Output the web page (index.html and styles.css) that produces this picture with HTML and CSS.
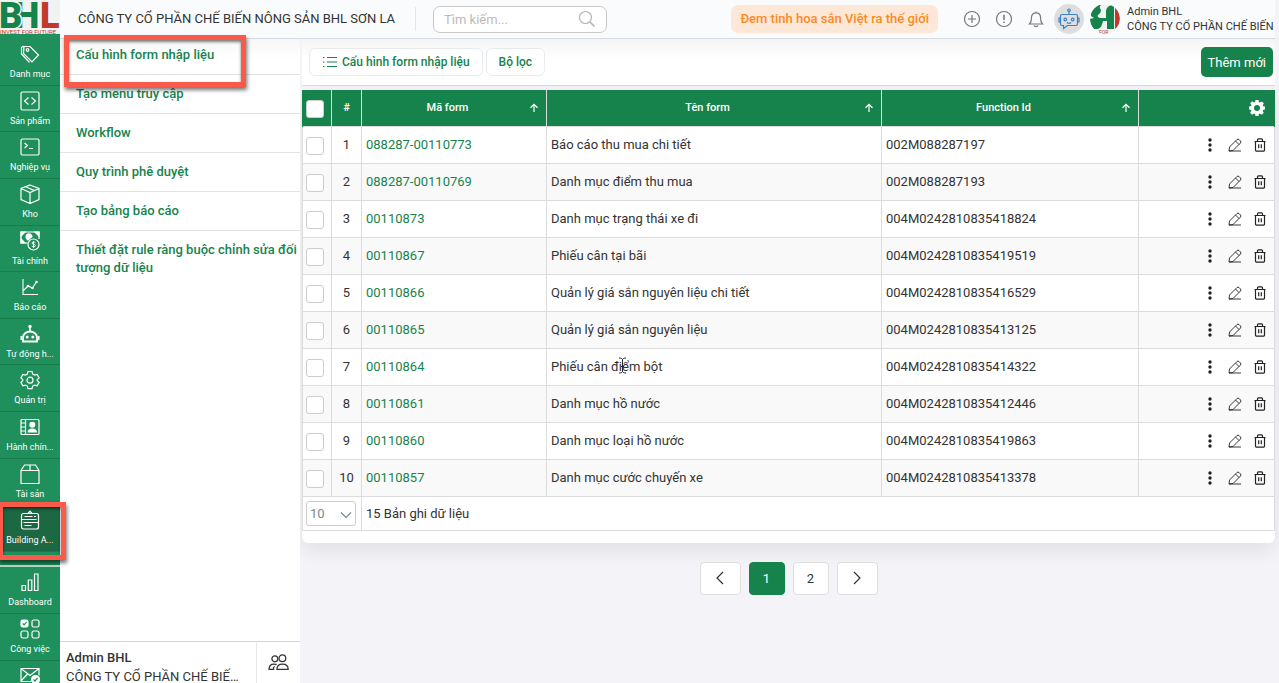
FILE: index.html
```html
<!DOCTYPE html>
<html lang="vi">

<head>
    <meta charset="UTF-8">
    <meta name="viewport" content="width=device-width, initial-scale=1.0">
    <title>Cấu hình form nhập liệu</title>
    <link rel="stylesheet" href="styles.css">
</head>

<body>

    <!-- icon sprite -->
    <svg class="sprite" aria-hidden="true">
        <symbol id="i-tag" viewBox="0 0 20 20"><path d="M4 2.500h6l8.500 8.500-6.500 7L3.500 9.500z"/><path d="M3.500 2L1.500 3.500v6.500l8 8.500"/><circle cx="7.500" cy="6" r="1.300"/></symbol>
        <symbol id="i-code" viewBox="0 0 20 20"><rect x="1" y="1" width="18" height="18" rx="1.500"/><path d="M8.500 6.500L4.500 10l4 3.500M11.500 6.500l4 3.500-4 3.500"/></symbol>
        <symbol id="i-term" viewBox="0 0 20 20"><rect x="1" y="2" width="18" height="16" rx="1.500"/><path d="M4.500 6l3 2.500-3 2.500M9 11.500h4"/></symbol>
        <symbol id="i-box" viewBox="0 0 20 20"><path d="M10 1l9 3.500v11L10 19.500l-9-4v-11zM1 4.500l9 4 9-4M10 8.500v11M5.500 2.800l9 3.800"/></symbol>
        <symbol id="i-money" viewBox="0 0 20 20"><path d="M7.500 12H1V1h18v7"/><path d="M1 1h4L1 5zM19 1h-4l4 4zM1 12h4L1 8z" fill="currentColor"/><path d="M7 8a3 3 0 1 1 5-2.500L8 9z" fill="currentColor"/><circle cx="13.500" cy="13.500" r="5.500"/><path d="M15.300 11.700c-.5-1-3.300-1-3.300.4s3.300 1 3.300 2.500-2.800 1.500-3.500.4M13.500 10.300v6.500" stroke-width="1"/></symbol>
        <symbol id="i-chart" viewBox="0 0 20 20"><path d="M3 2v15.500h15M3.500 13.500L8 9l4.500 2L16 5.500" stroke-width="1.100"/><g fill="currentColor" stroke="none"><circle cx="8" cy="9" r="1.300"/><circle cx="12.500" cy="11" r="1.300"/><circle cx="16.500" cy="5" r="1.300"/></g></symbol>
        <symbol id="i-robot" viewBox="0 0 20 20"><path d="M3 17.500v-4a7 6 0 0 1 14 0v4z" stroke-width="1.800"/><path d="M10 7V2.500M1.200 12v4M18.800 12v4" stroke-width="1.500"/><g fill="currentColor" stroke="none"><circle cx="10" cy="2.500" r="1.700"/><circle cx="7.200" cy="13" r="1.500"/><circle cx="12.800" cy="13" r="1.500"/></g></symbol>
        <symbol id="i-gear" viewBox="0 0 20 20"><path d="M8 1.500h4l.7 2.600 1.800 1 2.600-.7 2 3.400L17.200 9.700v.9l1.900 1.800-2 3.400-2.600-.7-1.800 1-.7 2.600H8l-.7-2.600-1.800-1-2.600.7-2-3.400 1.900-1.800v-.9L.9 7.800l2-3.400 2.600.7 1.800-1z"/><circle cx="10" cy="10.200" r="3"/></symbol>
        <symbol id="i-contact" viewBox="0 0 20 20"><rect x="1" y="2.500" width="18" height="15" rx="1"/><path d="M5.500 2.500v15M1 6h4.500M1 10h4.500M1 14h4.500"/><g fill="currentColor" stroke="none"><circle cx="12.300" cy="7.800" r="3"/><path d="M7.500 15.500c.3-3 2-4 4.800-4s4.500 1 4.800 4z"/></g></symbol>
        <symbol id="i-asset" viewBox="0 0 20 20"><path d="M1 6.500h18V19.500H1zM1 6.500L4.500 1h11L19 6.500M10 1v5"/></symbol>
        <symbol id="i-build" viewBox="0 0 20 20"><rect x="1.500" y="3.500" width="17" height="15.500" rx="2"/><path d="M8 3.500L10 1.200l2 2.300M4.500 6.500h8M1.500 9.500h15M3.500 12.500h15M4.500 15.500h7M14 6.500h2" stroke-width="1.200"/></symbol>
        <symbol id="i-bars" viewBox="0 0 20 20"><path d="M2 13.500h3.500v5H2zM8.300 8h3.500v10.500H8.300zM14.500 2H18v16.500h-3.500z"/></symbol>
        <symbol id="i-tasks" viewBox="0 0 20 20"><rect x="1" y="1" width="7" height="7" rx="1.800" fill="currentColor"/><rect x="12" y="1" width="7" height="7" rx="1.800"/><rect x="1" y="12" width="7" height="7" rx="1.800"/><rect x="12" y="12" width="7" height="7" rx="1.800"/><path d="M2.800 4.500l1.300 1.300 2.500-2.600" stroke="#1f8f5b" stroke-width="1.200"/></symbol>
        <symbol id="i-mail" viewBox="0 0 20 20"><path d="M11 15.500H1V2.500h18v7M1 2.500l9 7 9-7M1 15l6.500-7"/><circle cx="15.500" cy="13.500" r="4" fill="currentColor"/><path d="M13.500 13.500l1.500 1.500 2.500-3" stroke="#1f8f5b" stroke-width="1.200"/></symbol>
        <symbol id="i-users" viewBox="0 0 20 20"><circle cx="6.500" cy="6.500" r="2.800"/><circle cx="13.700" cy="6" r="3.200"/><path d="M8.500 16.500c0-3.500 2-5 5.200-5s5.500 1.500 5.500 5zM6 16.500H1c0-3.500 1.500-5 4.500-5 1 0 2 .1 2.700.5M5 16.500c0-1.500.5-2.500 1.300-3"/></symbol>
        <symbol id="i-search" viewBox="0 0 18 18"><circle cx="7.500" cy="7.500" r="6"/><path d="M12 12l4.500 4.500" stroke-width="1.700"/></symbol>
        <symbol id="i-plus" viewBox="0 0 18 18"><circle cx="9" cy="9" r="7.500"/><path d="M9 5v8M5 9h8"/></symbol>
        <symbol id="i-alert" viewBox="0 0 18 18"><circle cx="9" cy="9" r="7.500"/><path d="M9 4.800v5.200M9 11.500v1.500" stroke-width="1.500"/></symbol>
        <symbol id="i-bell" viewBox="0 0 18 18"><path d="M9 1.500v1M2.500 14c2-2 2-3.500 2-6.500C4.500 4.500 6.500 2.800 9 2.800s4.500 1.700 4.500 4.700c0 3 0 4.500 2 6.500zM7 15.500c.3 1.300 3.700 1.300 4 0"/></symbol>
        <symbol id="i-bot" viewBox="0 0 22 22"><path d="M4 6.500h14a1.500 1.500 0 0 1 1.500 1.500v8a1.500 1.500 0 0 1-1.500 1.500H9.500L5.500 20.500v-3H4A1.500 1.500 0 0 1 2.500 16V8A1.500 1.500 0 0 1 4 6.500zM2.500 10H1v4h1.500M19.500 10H21v4h-1.500M11 6.500V3.500M9 14.500c1 1 3 1 4 0"/><circle cx="11" cy="2.300" r="1.300"/><circle cx="7.300" cy="11.500" r="1.300"/><circle cx="14.700" cy="11.500" r="1.300"/></symbol>
        <symbol id="i-list" viewBox="0 0 16 16"><path d="M5 3.500h10M5 8h10M5 12.500h10M1 3.500h1.500M1 8h1.500M1 12.500h1.500"/></symbol>
        <symbol id="i-up" viewBox="0 0 10 10"><path d="M5 9V1.500M1.500 4.700L5 1.300l3.500 3.400"/></symbol>
        <symbol id="i-cog" viewBox="0 0 16 16"><path fill="currentColor" fill-rule="evenodd" stroke="none" d="M6.500 0h3l.5 2.200 1 .4L13 1.400l1.900 2L13.700 5.200l.4 1L16 6.600v2.900l-2 .4-.4 1 1.200 1.900-2 2-1.900-1.200-1 .4L9.500 16h-3L6 14l-1-.4-1.900 1.200-2-2 1.200-1.900-.4-1L0 9.500v-3l2-.4.400-1L1.200 3.300l2-2L5 2.500l1-.4zM8 5a3 3 0 1 0 0 6 3 3 0 0 0 0-6z"/></symbol>
        <symbol id="i-more" viewBox="0 0 14 14"><g fill="currentColor" stroke="none"><circle cx="7" cy="2" r="1.700"/><circle cx="7" cy="7" r="1.700"/><circle cx="7" cy="12" r="1.700"/></g></symbol>
        <symbol id="i-edit" viewBox="0 0 14 14"><path d="M1 13l.5-4L9 1.500a1.500 1.500 0 0 1 2 0l1.500 1.500a1.500 1.500 0 0 1 0 2L5 12.500zM7.500 3l3.500 3.500M1 13h12" stroke-width=".9"/></symbol>
        <symbol id="i-trash" viewBox="0 0 14 14"><path d="M1.500 3.500h11M2.500 3.500v8.500a1.200 1.200 0 0 0 1.200 1.200h6.600a1.200 1.200 0 0 0 1.200-1.200V3.500M4.500 3.500V1.800a1 1 0 0 1 1-1h3a1 1 0 0 1 1 1v1.700M5.700 6.300v4M8.300 6.300v4"/></symbol>
        <symbol id="i-left" viewBox="0 0 14 14"><path d="M10 1L4 7l6 6"/></symbol>
        <symbol id="i-right" viewBox="0 0 14 14"><path d="M4 1l6 6-6 6"/></symbol>
        <symbol id="i-down" viewBox="0 0 14 14"><path d="M2 4.500l5 5 5-5"/></symbol>
    </svg>

    <div class="app">
        <aside class="sidebar">
            <a class="logo" href="#" aria-label="BHL">
                <svg viewBox="0 0 60 34">
                    <text x="14" y="28" class="logo-letter green">H</text>
                    <text x="-1" y="28" class="logo-letter green edge">B</text>
                    <text x="40" y="28" class="logo-letter red">L</text>
                    <text x="0" y="34" class="logo-sub">INVEST FOR FUTURE</text>
                </svg>
            </a>
            <nav class="side-nav">
                <a href="#"><svg><use href="#i-tag"/></svg><span>Danh mục</span></a>
                <a href="#"><svg><use href="#i-code"/></svg><span>Sản phẩm</span></a>
                <a href="#"><svg><use href="#i-term"/></svg><span>Nghiệp vụ</span></a>
                <a href="#"><svg><use href="#i-box"/></svg><span>Kho</span></a>
                <a href="#"><svg><use href="#i-money"/></svg><span>Tài chính</span></a>
                <a href="#"><svg><use href="#i-chart"/></svg><span>Báo cáo</span></a>
                <a href="#"><svg><use href="#i-robot"/></svg><span>Tự động h...</span></a>
                <a href="#"><svg><use href="#i-gear"/></svg><span>Quản trị</span></a>
                <a href="#"><svg><use href="#i-contact"/></svg><span>Hành chín...</span></a>
                <a href="#"><svg><use href="#i-asset"/></svg><span>Tài sản</span></a>
                <a href="#" class="active"><svg><use href="#i-build"/></svg><span>Building A...</span></a>
            </nav>
            <nav class="side-nav side-extra">
                <a href="#"><svg><use href="#i-bars"/></svg><span>Dashboard</span></a>
                <a href="#"><svg><use href="#i-tasks"/></svg><span>Công việc</span></a>
                <a href="#" aria-label="Mail"><svg><use href="#i-mail"/></svg></a>
            </nav>
            <div class="mark mark-side"></div>
        </aside>

        <div class="page">
            <header class="topbar">
                <div class="company">CÔNG TY CỔ PHẦN CHẾ BIẾN NÔNG SẢN BHL SƠN LA</div>
                <label class="search">
                    <input type="text" placeholder="Tìm kiếm..." aria-label="Tìm kiếm">
                    <svg><use href="#i-search"/></svg>
                </label>
                <div class="slogan">Đem tinh hoa sắn Việt ra thế giới</div>
                <div class="tools">
                    <button aria-label="Thêm"><svg><use href="#i-plus"/></svg></button>
                    <button aria-label="Thông tin"><svg><use href="#i-alert"/></svg></button>
                    <button aria-label="Thông báo"><svg><use href="#i-bell"/></svg></button>
                </div>
                <button class="bot" aria-label="Trợ lý"><svg><use href="#i-bot"/></svg></button>
                <svg class="avatar" viewBox="0 0 30 30">
                    <path class="a-green" d="M1 10C2 5 5 2 8 1h3c-2 2-1 3 0 5 0 3-2 4-3 5s0 3 3 3h5V8c0-4 2-6 6-7h2v24h-7v-8h-4c-1 5-3 8-6 8H4C1 22 0 18 0 15l4-1-3-2z"/>
                    <path class="a-red" d="M25 3c6 6 7 16 0 22z"/>
                    <text x="9" y="30">FOR</text>
                </svg>
                <div class="user">
                    <div>Admin BHL</div>
                    <div>CÔNG TY CỔ PHẦN CHẾ BIẾN</div>
                </div>
            </header>

            <div class="body">
                <section class="submenu">
                    <nav>
                        <a href="#">Cấu hình form nhập liệu</a>
                        <a href="#">Tạo menu truy cập</a>
                        <a href="#">Workflow</a>
                        <a href="#">Quy trình phê duyệt</a>
                        <a href="#">Tạo bảng báo cáo</a>
                        <a href="#">Thiết đặt rule ràng buộc chỉnh sửa đối tượng dữ liệu</a>
                    </nav>
                    <div class="account">
                        <div class="account-name">
                            <b>Admin BHL</b>
                            <span>CÔNG TY CỔ PHẦN CHẾ BIẾN NÔNG SẢN BHL SƠN LA</span>
                        </div>
                        <button aria-label="Người dùng"><svg><use href="#i-users"/></svg></button>
                    </div>
                    <div class="mark mark-menu"></div>
                </section>

                <main class="main">
                    <div class="toolbar">
                        <button class="tab"><svg><use href="#i-list"/></svg>Cấu hình form nhập liệu</button>
                        <button class="tab">Bộ lọc</button>
                        <button class="add">Thêm mới</button>
                    </div>

                    <div class="card">
                        <table>
                            <colgroup>
                                <col class="c-check"><col class="c-no"><col class="c-code"><col><col class="c-func"><col class="c-act">
                            </colgroup>
                            <thead>
                                <tr>
                                    <th><input type="checkbox" aria-label="Chọn tất cả"></th>
                                    <th>#</th>
                                    <th><div class="th">Mã form<svg><use href="#i-up"/></svg></div></th>
                                    <th><div class="th">Tên form<svg><use href="#i-up"/></svg></div></th>
                                    <th><div class="th">Function Id<svg><use href="#i-up"/></svg></div></th>
                                    <th class="cog"><button aria-label="Cài đặt"><svg><use href="#i-cog"/></svg></button></th>
                                </tr>
                            </thead>
                            <tbody id="rows"></tbody>
                            <tfoot>
                                <tr>
                                    <td colspan="2">
                                        <div class="size">
                                            <select aria-label="Số dòng">
                                                <option>10</option>
                                                <option>20</option>
                                                <option>50</option>
                                            </select>
                                            <svg><use href="#i-down"/></svg>
                                        </div>
                                    </td>
                                    <td colspan="4">15 Bản ghi dữ liệu</td>
                                </tr>
                            </tfoot>
                        </table>
                    </div>

                    <div class="pager">
                        <button class="arrow" aria-label="Trang trước"><svg><use href="#i-left"/></svg></button>
                        <button class="current">1</button>
                        <button>2</button>
                        <button class="arrow" aria-label="Trang sau"><svg><use href="#i-right"/></svg></button>
                    </div>
                </main>
            </div>
        </div>

        <svg class="cursor" viewBox="0 0 9 17"><path d="M1 1c2 0 3 .5 3.500 1.500C5 1.500 6 1 8 1M4.500 2.500v12M1 16c2 0 3-.5 3.500-1.500C5 15.500 6 16 8 16M3 9.500h3"/></svg>
    </div>

    <script>
        const forms = [
            ['088287-00110773', 'Báo cáo thu mua chi tiết', '002M088287197'],
            ['088287-00110769', 'Danh mục điểm thu mua', '002M088287193'],
            ['00110873', 'Danh mục trạng thái xe đi', '004M0242810835418824'],
            ['00110867', 'Phiếu cân tại bãi', '004M0242810835419519'],
            ['00110866', 'Quản lý giá sắn nguyên liệu chi tiết', '004M0242810835416529'],
            ['00110865', 'Quản lý giá sắn nguyên liệu', '004M0242810835413125'],
            ['00110864', 'Phiếu cân điểm bột', '004M0242810835414322'],
            ['00110861', 'Danh mục hồ nước', '004M0242810835412446'],
            ['00110860', 'Danh mục loại hồ nước', '004M0242810835419863'],
            ['00110857', 'Danh mục cước chuyến xe', '004M0242810835413378']
        ];

        document.getElementById('rows').innerHTML = forms.map((f, i) => `
            <tr>
                <td><input type="checkbox" aria-label="Chọn dòng ${i + 1}"></td>
                <td class="no">${i + 1}</td>
                <td><a href="#">${f[0]}</a></td>
                <td>${f[1]}</td>
                <td>${f[2]}</td>
                <td>
                    <div class="actions">
                        <button aria-label="Thêm"><svg><use href="#i-more"/></svg></button>
                        <button aria-label="Sửa"><svg><use href="#i-edit"/></svg></button>
                        <button aria-label="Xóa"><svg><use href="#i-trash"/></svg></button>
                    </div>
                </td>
            </tr>`).join('');
    </script>

</body>

</html>
```
FILE: styles.css
```css
* {
    box-sizing: border-box;
}

body {
    margin: 0;
    font-family: Roboto, 'Liberation Sans', sans-serif;
    font-size: 13px;
    color: #333;
    background: #f4f3f8;
}

a {
    color: #17834c;
    text-decoration: none;
}

button {
    padding: 0;
    border: none;
    background: none;
    font: inherit;
    color: inherit;
    cursor: pointer;
}

svg {
    display: block;
    flex: none;
    fill: none;
    stroke: currentColor;
    stroke-width: 1.2;
}

.sprite {
    position: absolute;
    width: 0;
    height: 0;
}

.app {
    display: flex;
    height: 100vh;
    overflow: hidden;
    position: relative;
}

/* sidebar */
.sidebar {
    position: relative;
    z-index: 3;
    flex: none;
    width: 60px;
    background: #1f8f5b;
}

.logo {
    display: block;
    height: 39px;
    background: linear-gradient(#f1f3f2 34px, #1f8f5b 34px);
}

.logo svg {
    width: 60px;
    height: 34px;
    stroke: none;
}

.logo-letter {
    font-size: 36px;
    font-weight: 900;
}

.green {
    fill: #17834c;
}

.red {
    fill: #c0392b;
}

.edge {
    stroke: #f1f3f2;
    stroke-width: 3px;
    paint-order: stroke;
}

.logo-sub {
    font-size: 6px;
    fill: #c0392b;
}

.side-nav {
    display: grid;
    grid-auto-rows: 1fr;
    height: 513px;
}

.side-nav a {
    display: flex;
    flex-direction: column;
    align-items: center;
    gap: 4px;
    padding-top: 5px;
    border-bottom: 1px solid #187c4a;
    font-size: 9px;
    line-height: 12px;
    white-space: nowrap;
    color: #fff;
}

.side-nav svg {
    width: 20px;
    height: 20px;
}

.side-nav .active {
    background: #1b6843;
}

.side-extra {
    height: 143px;
    margin-top: 13px;
    border-top: 2px solid #b5dcc8;
}

/* red highlight frames */
.mark {
    position: absolute;
    border: 5px solid #fb5a4b;
    box-shadow: 1px 3px 4px rgba(0, 0, 0, 0.55), inset 0 2px 3px rgba(0, 0, 0, 0.5);
    pointer-events: none;
}

.mark-side {
    left: -2px;
    top: 502px;
    width: 68px;
    height: 58px;
}

.mark-menu {
    left: 4px;
    top: -4px;
    width: 182px;
    height: 52px;
}

.page {
    display: flex;
    flex: 1;
    flex-direction: column;
    min-width: 0;
}

/* top bar */
.topbar {
    display: flex;
    align-items: center;
    flex: none;
    height: 39px;
    margin-right: 4px;
    padding-left: 18px;
    border-bottom: 1px solid #d5dbe2;
    background: #fafbfd;
}

.company {
    flex: none;
    width: 338px;
    border-right: 1px solid #e4e6ea;
    line-height: 24px;
    white-space: nowrap;
}

.search {
    display: flex;
    align-items: center;
    flex: none;
    width: 174px;
    height: 27px;
    margin-left: 17px;
    padding: 0 10px;
    border: 1px solid #c8c8c8;
    border-radius: 7px;
    background: #fff;
    color: #b5b5b5;
}

.search input {
    flex: 1;
    min-width: 0;
    padding: 0;
    border: none;
    outline: none;
    background: none;
    font: inherit;
}

.search input::placeholder {
    color: #bbb;
}

.search svg {
    width: 18px;
    height: 18px;
}

.slogan {
    margin-left: auto;
    padding: 0 9px;
    border-radius: 7px;
    background: #fde8d7;
    color: #fb8a24;
    font-weight: 500;
    line-height: 28px;
    white-space: nowrap;
}

.tools {
    display: flex;
    gap: 14px;
    margin-left: 25px;
    color: #777;
}

.tools svg {
    width: 18px;
    height: 18px;
}

.bot {
    display: grid;
    place-items: center;
    width: 30px;
    height: 30px;
    margin-left: 9px;
    border-radius: 50%;
    background: #dedede;
    color: #3b82c4;
}

.bot svg {
    width: 22px;
    height: 22px;
}

.avatar {
    width: 30px;
    height: 30px;
    margin: 0 7px 0 6px;
    border-radius: 50%;
    background: #f1f3f2;
    stroke: none;
}

.a-green {
    fill: #17834c;
}

.a-red,
.avatar text {
    fill: #c0392b;
    font-size: 5px;
}

.user {
    width: 148px;
    font-size: 11px;
    line-height: 15px;
    white-space: nowrap;
}

.body {
    display: flex;
    flex: 1;
    min-height: 0;
}

/* second level menu */
.submenu {
    position: relative;
    z-index: 2;
    display: flex;
    flex-direction: column;
    flex: none;
    width: 240px;
    background: linear-gradient(#f7f7f7, #fff 20px);
}

.submenu nav {
    flex: 1;
}

.submenu nav a {
    display: block;
    padding: 10px 0 10px 16px;
    border-bottom: 1px solid #e2e2e2;
    font-weight: 500;
    line-height: 18px;
}

.submenu nav a:first-child {
    padding-top: 7px;
}

.submenu nav a:last-child {
    border-bottom: none;
}

.account {
    display: flex;
    height: 42px;
    border-top: 1px solid #d5d5d5;
}

.account-name {
    display: flex;
    flex-direction: column;
    flex: 1;
    min-width: 0;
    padding: 6px 17px 0 6px;
    border-right: 1px solid #e8e8e8;
    line-height: 19px;
}

.account-name b {
    font-weight: 500;
}

.account-name span {
    overflow: hidden;
    text-overflow: ellipsis;
    white-space: nowrap;
}

.account button {
    padding: 0 11px;
}

.account svg {
    width: 21px;
    height: 21px;
}

/* content */
.main {
    flex: 1;
    min-width: 0;
    padding: 0 4px 0 2px;
}

.toolbar {
    display: flex;
    align-items: center;
    gap: 3px;
    height: 47px;
    margin-bottom: 4px;
    padding: 0 2px 0 7px;
    border-bottom: 1px solid #d8dadd;
    background: linear-gradient(#f5f5f5, #fff 20px);
}

.tab {
    display: flex;
    align-items: center;
    gap: 4px;
    height: 28px;
    padding: 0 12px;
    border: 1px solid #e8ebf0;
    border-radius: 6px;
    background: #fff;
    color: #17834c;
    font-size: 12px;
    font-weight: 500;
}

.tab svg {
    width: 16px;
    height: 16px;
}

.add {
    height: 30px;
    margin-left: auto;
    padding: 0 7px;
    border-radius: 5px;
    background: #17834c;
    color: #fff;
}

.card {
    padding-bottom: 12px;
    border-radius: 0 0 6px 6px;
    background: #fff;
    box-shadow: 0 8px 20px rgba(0, 0, 0, 0.08);
}

table {
    width: 100%;
    table-layout: fixed;
    border-collapse: collapse;
}

.c-check {
    width: 29px;
}

.c-no {
    width: 30px;
}

.c-code {
    width: 185px;
}

.c-func {
    width: 257px;
}

.c-act {
    width: 136px;
}

th,
td {
    height: 37px;
    padding: 0 4px;
    border: 1px solid #dcdcdc;
    text-align: left;
}

th {
    height: 36px;
    border-width: 0 1px;
    background: #17834c;
    color: #fff;
    font-size: 11px;
    font-weight: 500;
    text-align: center;
}

th:first-child {
    border-left-color: #17834c;
}

th:last-child {
    border-right-color: #17834c;
}

th:first-child,
td:first-child {
    padding-left: 3px;
}

.th {
    display: grid;
    grid-template-columns: 1fr 10px;
    align-items: center;
    padding-right: 3px;
}

.th svg {
    width: 10px;
    height: 10px;
}

.cog button {
    display: block;
    margin: 0 5px 0 auto;
}

.cog svg {
    width: 16px;
    height: 16px;
}

tbody tr:nth-child(even) {
    background: #f9f9f9;
}

td.no {
    text-align: center;
}

input[type="checkbox"] {
    appearance: none;
    display: block;
    width: 18px;
    height: 18px;
    margin: 2px 0 0;
    border: 1px solid #ccc;
    border-radius: 3px;
    background: #fff;
}

.actions {
    display: flex;
    justify-content: flex-end;
    gap: 11px;
    padding-right: 3px;
    color: #222;
}

.actions svg {
    width: 14px;
    height: 14px;
}

tfoot td {
    height: 34px;
}

.size {
    position: relative;
    width: 50px;
    color: #7b8794;
}

.size select {
    appearance: none;
    display: block;
    width: 50px;
    height: 25px;
    padding: 0 3px;
    border: 1px solid #ccc;
    border-radius: 3px;
    background: #fff;
    color: inherit;
    font: inherit;
}

.size svg {
    position: absolute;
    right: 3px;
    top: 7px;
    width: 14px;
    height: 14px;
    pointer-events: none;
}

.pager {
    display: flex;
    justify-content: center;
    gap: 8px;
    margin-top: 19px;
}

.pager button {
    display: grid;
    place-items: center;
    width: 36px;
    height: 33px;
    border: 1px solid #dedede;
    border-radius: 4px;
    background: #fff;
}

.pager .arrow {
    width: 41px;
}

.pager svg {
    width: 14px;
    height: 14px;
}

.pager .current {
    border-color: #17834c;
    background: #17834c;
    color: #fff;
}

/* text pointer over the table */
.cursor {
    position: absolute;
    left: 618px;
    top: 357px;
    width: 9px;
    height: 17px;
    color: #222;
    stroke-width: 1;
}
```
